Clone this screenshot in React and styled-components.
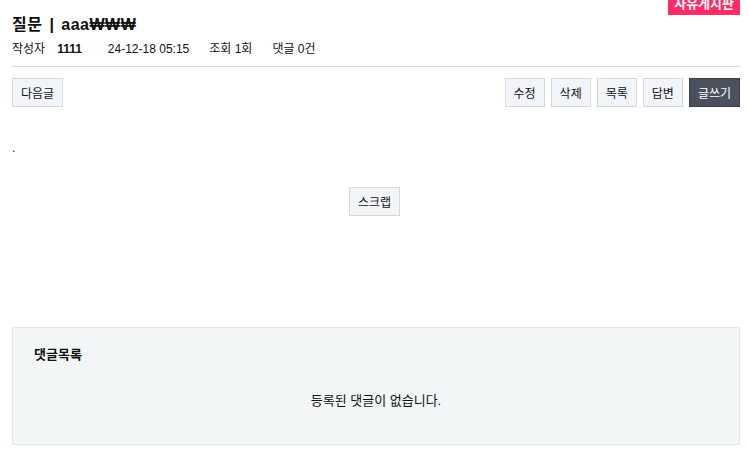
import React from "react";
import styled, { createGlobalStyle } from "styled-components";

const GlobalStyle = createGlobalStyle`
  body {
    margin: 0;
    background: #fff;
    font-family: "Liberation Sans", "Noto Sans CJK KR", sans-serif;
    color: #111;
  }
`;

const Page = styled.div`
  position: relative;
  padding: 0 8px 0 12px;
`;

const Badge = styled.span`
  position: absolute;
  top: -7px;
  right: 8px;
  background: #ff2b67;
  color: #fff;
  font-size: 13px;
  font-weight: 700;
  line-height: 22px;
  padding: 0 6px;
`;

const Header = styled.div`
  padding-top: 14px;
  border-bottom: 1px solid #dedede;
  padding-bottom: 8px;
`;

const Title = styled.h1`
  margin: 0;
  font-size: 16px;
  font-weight: 700;
  line-height: 21px;
  letter-spacing: 0.5px;
  word-spacing: 2px;
`;

const Meta = styled.div`
  display: flex;
  align-items: center;
  gap: 20px;
  margin-top: 5px;
  font-size: 12px;
  line-height: 18px;
`;

const MetaItem = styled.span`
  display: flex;
  gap: 12px;
  margin-right: 6px;
`;

const Strong = styled.b`
  font-weight: 700;
`;

const Toolbar = styled.div`
  display: flex;
  justify-content: space-between;
  margin-top: 11px;
`;

const Group = styled.div`
  display: flex;
  gap: 6px;
`;

const Button = styled.button`
  height: 29px;
  padding: 0 8px;
  font-family: inherit;
  font-size: 12px;
  border: 1px solid ${(p) => (p.$dark ? "#3b4049" : "#d6dad7")};
  background: ${(p) => (p.$dark ? "#4a515c" : "#f1f5fa")};
  color: ${(p) => (p.$dark ? "#fff" : "#111")};
  cursor: pointer;
`;

const Body = styled.div`
  padding-top: 34px;
  font-size: 12px;
  min-height: 220px;
  box-sizing: border-box;
`;

const Scrap = styled.div`
  display: flex;
  justify-content: center;
  margin-top: 32px;
  padding-right: 3px;
`;

const Comments = styled.section`
  background: #f3f6f7;
  border: 1px solid #e2e6ea;
  padding: 19px 21px 34px;
  height: 118px;
  box-sizing: border-box;
`;

const CommentsTitle = styled.h2`
  margin: 0;
  font-size: 13px;
  font-weight: 700;
  line-height: 16px;
`;

const Empty = styled.p`
  margin: 30px 0 0;
  text-align: center;
  font-size: 13px;
  line-height: 16px;
`;

export default function App() {
  return (
    <Page>
      <GlobalStyle />
      <Badge>자유게시판</Badge>
      <Header>
        <Title>질문 | aaa₩₩₩</Title>
        <Meta>
          <MetaItem>
            작성자 <Strong>1111</Strong>
          </MetaItem>
          <span>24-12-18 05:15</span>
          <span>조회 1회</span>
          <span>댓글 0건</span>
        </Meta>
      </Header>
      <Toolbar>
        <Group>
          <Button>다음글</Button>
        </Group>
        <Group>
          <Button>수정</Button>
          <Button>삭제</Button>
          <Button>목록</Button>
          <Button>답변</Button>
          <Button $dark>글쓰기</Button>
        </Group>
      </Toolbar>
      <Body>
        <div>.</div>
        <Scrap>
          <Button>스크랩</Button>
        </Scrap>
      </Body>
      <Comments>
        <CommentsTitle>댓글목록</CommentsTitle>
        <Empty>등록된 댓글이 없습니다.</Empty>
      </Comments>
    </Page>
  );
}
